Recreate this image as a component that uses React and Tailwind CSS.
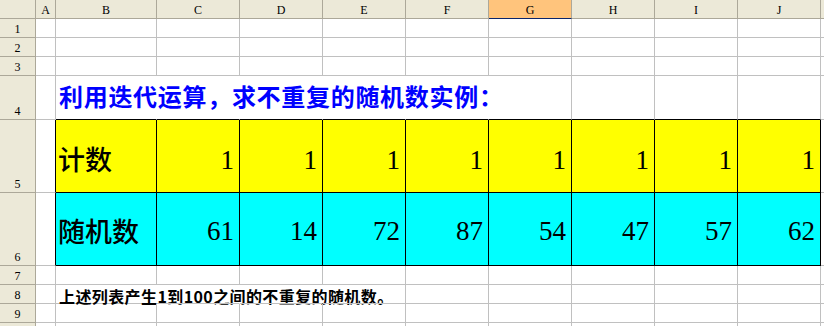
const COLS = ['A', 'B', 'C', 'D', 'E', 'F', 'G', 'H', 'I', 'J'];
const W = [
  'w-[20px]',
  'w-[101px]',
  'w-[83px]',
  'w-[83px]',
  'w-[83px]',
  'w-[83px]',
  'w-[83px]',
  'w-[83px]',
  'w-[83px]',
  'w-[83px]',
];
const counts = [1, 1, 1, 1, 1, 1, 1, 1];
const rands = [61, 14, 72, 87, 54, 47, 57, 62];

const GR = 'border-r-[#C0C0C0]';
const GB = 'border-b-[#C0C0C0]';
const BR = 'border-r-black';
const BB = 'border-b-black';
const HR = 'border-r-transparent';

const CJK = "font-['Noto_Sans_CJK_SC','Noto_Sans',sans-serif]";

function Row({ h, n, cells }) {
  return (
    <div className={`flex ${h}`}>
      <div className="w-[36px] shrink-0 bg-[#ECE9D8] border-r border-b border-[#ACA899] flex items-end justify-center text-[12px] leading-[14px] pb-[1px] text-black">
        {n}
      </div>
      {COLS.map((c, i) => {
        const cell = (cells && cells[i]) || {};
        return (
          <div
            key={c}
            className={`${W[i]} shrink-0 border-r border-b ${cell.r || GR} ${cell.b || GB} ${cell.bg || ''} ${cell.cls || ''}`}
          >
            {cell.content}
          </div>
        );
      })}
      <div className="flex-1 border-b border-[#C0C0C0]" />
    </div>
  );
}

function numCell(v, pb, bg) {
  return {
    r: BR,
    b: BB,
    bg,
    cls: `flex items-end justify-end pr-[5px] text-[27px] leading-[27px] text-black ${pb}`,
    content: v,
  };
}

export default function App() {
  const row4 = [
    {},
    {
      r: HR,
      b: BB,
      cls: `flex items-end whitespace-nowrap pl-[3px] pb-[11px] ${CJK} text-[24px] leading-[24px] tracking-[0.7px] font-semibold text-[#0000FF]`,
      content: '利用迭代运算，求不重复的随机数实例：',
    },
    { r: HR, b: BB },
    { r: HR, b: BB },
    { r: HR, b: BB },
    { r: HR, b: BB },
    { b: BB },
    { b: BB },
    { b: BB },
    { b: BB },
  ];

  const row5 = [
    { r: BR },
    {
      r: BR,
      b: BB,
      bg: 'bg-[#FFFF00]',
      cls: `flex items-end pl-[2px] pb-[20px] ${CJK} text-[27px] leading-[27px] font-medium text-black`,
      content: '计数',
    },
    ...counts.map((v) => numCell(v, 'pb-[18px]', 'bg-[#FFFF00]')),
  ];

  const row6 = [
    { r: BR },
    {
      r: BR,
      b: BB,
      bg: 'bg-[#00FFFF]',
      cls: `flex items-end pl-[2px] pb-[21px] ${CJK} text-[27px] leading-[27px] font-medium text-black`,
      content: '随机数',
    },
    ...rands.map((v) => numCell(v, 'pb-[20px]', 'bg-[#00FFFF]')),
  ];

  const row8 = [
    {},
    {
      r: HR,
      cls: `flex items-end whitespace-nowrap pl-[3px] ${CJK} text-[16px] leading-[14px] tracking-[0.4px] font-bold text-black`,
      content: '上述列表产生1到100之间的不重复的随机数。',
    },
    { r: HR },
    { r: HR },
  ];

  return (
    <div className="w-[824px] h-[326px] overflow-hidden bg-white font-['Liberation_Serif',serif] text-black">
      <div className="flex h-[19px]">
        <div className="w-[36px] shrink-0 bg-[#ECE9D8] border-r border-b border-[#ACA899]" />
        {COLS.map((c, i) => (
          <div
            key={c}
            className={`${W[i]} shrink-0 flex items-end justify-center text-[12px] leading-[14px] pb-[1px] border-r border-b ${
              c === 'G'
                ? 'bg-[#FFC47C] border-r-[#ACA899] border-b-[#0A246A]'
                : 'bg-[#ECE9D8] border-[#ACA899]'
            }`}
          >
            {c}
          </div>
        ))}
        <div className="flex-1 bg-[#ECE9D8] border-b border-[#ACA899]" />
      </div>
      <Row h="h-[19px]" n={1} />
      <Row h="h-[19px]" n={2} />
      <Row h="h-[19px]" n={3} />
      <Row h="h-[44px]" n={4} cells={row4} />
      <Row h="h-[73px]" n={5} cells={row5} />
      <Row h="h-[73px]" n={6} cells={row6} />
      <Row h="h-[19px]" n={7} />
      <Row h="h-[19px]" n={8} cells={row8} />
      <Row h="h-[19px]" n={9} />
      <Row h="h-[19px]" n="" />
    </div>
  );
}
